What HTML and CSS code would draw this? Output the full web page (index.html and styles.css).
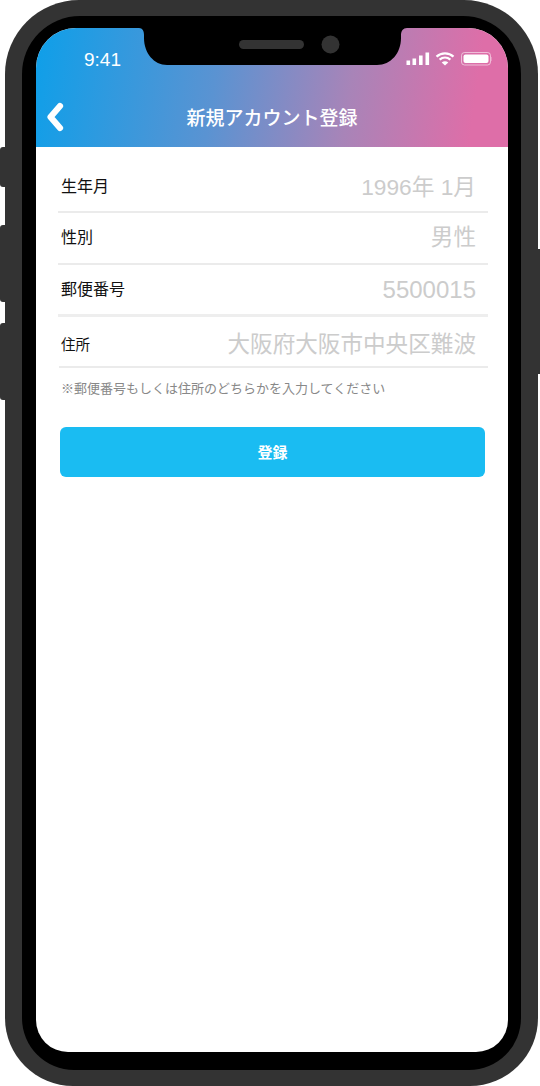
FILE: index.html
```html
<!DOCTYPE html>
<html lang="ja">
<head>
<meta charset="utf-8">
<title>新規アカウント登録</title>
<link rel="stylesheet" href="styles.css">
</head>
<body>
<div class="phone">
  <span class="side side-mute"></span>
  <span class="side side-up"></span>
  <span class="side side-down"></span>
  <span class="side side-power"></span>
  <div class="bezel">
    <div class="screen">
      <header class="header">
        <div class="status">
          <span class="time">9:41</span>
          <svg class="status-icons" width="86" height="15" viewBox="0 0 86 15">
            <rect x="0.500" y="8.500" width="3.600" height="4.500" fill="#fff"/>
            <rect x="6.500" y="6.500" width="3.600" height="6.500" fill="#fff"/>
            <rect x="13" y="3.500" width="3.600" height="9.500" fill="#fff"/>
            <rect x="19.500" y="0.500" width="3.600" height="12.500" fill="#fff"/>
            <path d="M30.500 4.600C35.300 0.200 42.700 0.200 47.500 4.600" fill="none" stroke="#fff" stroke-width="2.200"/>
            <path d="M33.600 7.700C36.800 5 41.200 5 44.400 7.700" fill="none" stroke="#fff" stroke-width="2.200"/>
            <path d="M39 13.600L35.700 10.400C37.700 8.900 40.300 8.900 42.300 10.400Z" fill="#fff"/>
            <rect x="55.500" y="0.500" width="29" height="12.500" rx="3" fill="none" stroke="#fff" stroke-opacity=".55"/>
            <rect x="57.500" y="2.500" width="25" height="8.500" rx="2" fill="#fff"/>
            <rect x="85.500" y="5" width="1" height="4" fill="#fff" fill-opacity=".55"/>
          </svg>
        </div>
        <nav class="nav">
          <svg class="back" width="18" height="30" viewBox="0 0 18 30">
            <path d="M14 4L4.500 15L14 26" fill="none" stroke="#fff" stroke-width="6.200" stroke-linecap="round" stroke-linejoin="round"/>
          </svg>
          <h1 class="title">新規アカウント登録</h1>
        </nav>
      </header>
      <svg class="notch" width="268" height="37" viewBox="0 0 268 37">
        <path d="M0 0C3.500 0 5 3 5 7V10C5 25 15 37 28 37H238C252 37 262 25 262 10V7C262 3 264 0 268 0Z" fill="#000"/>
        <rect x="100" y="12" width="65" height="9" rx="4.500" fill="#333"/>
        <circle cx="191.500" cy="16.500" r="9" fill="#333"/>
      </svg>
      <main class="form">
        <div class="row row-first">
          <span class="label">生年月</span>
          <span class="value value-date">1996年 1月</span>
        </div>
        <div class="row">
          <span class="label">性別</span>
          <span class="value">男性</span>
        </div>
        <div class="row row-strong">
          <span class="label">郵便番号</span>
          <span class="value value-number">5500015</span>
        </div>
        <div class="row row-address">
          <span class="label label-small">住所</span>
          <span class="value">大阪府大阪市中央区難波</span>
        </div>
        <p class="hint">※郵便番号もしくは住所のどちらかを入力してください</p>
        <button class="submit" type="button">登録</button>
      </main>
    </div>
  </div>
</div>
</body>
</html>
```
FILE: styles.css
```css
* {
  box-sizing: border-box;
}

html,
body {
  margin: 0;
  padding: 0;
  height: 1086px;
  background: #fff;
  overflow: hidden;
  font-family: "Liberation Sans", "Noto Sans CJK JP", sans-serif;
}

.phone {
  position: relative;
  width: 533px;
  height: 1086px;
  margin-left: 5px;
  padding: 16px 17px;
  background: #333;
  border-radius: 74px 74px 68px 68px;
}

.side {
  position: absolute;
  background: #333;
}

.side-mute,
.side-up,
.side-down {
  left: -5px;
  width: 6px;
  border-radius: 3px 0 0 3px;
}

.side-mute {
  top: 147px;
  height: 40px;
}

.side-up {
  top: 225px;
  height: 77px;
}

.side-down {
  top: 323px;
  height: 77px;
}

.side-power {
  top: 249px;
  right: -2px;
  width: 3px;
  height: 125px;
}

.bezel {
  height: 100%;
  padding: 12px 13px 18px 14px;
  background: #000;
  border-radius: 58px 58px 52px 52px;
}

.screen {
  position: relative;
  height: 100%;
  background: #fff;
  border-radius: 40px 40px 32px 32px;
  overflow: hidden;
}

.header {
  height: 119px;
  background: linear-gradient(98deg, #0e9fe9 0%, #5a93d2 38%, #a884b8 66%, #de6ea8 92%);
  color: #fff;
}

.status {
  display: flex;
  justify-content: space-between;
  align-items: flex-start;
  height: 60px;
  padding: 21px 16px 0 48px;
}

.time {
  font-size: 19px;
  line-height: 22px;
}

.status-icons {
  margin-top: 3px;
}

.nav {
  position: relative;
  display: flex;
  justify-content: center;
  align-items: center;
  height: 58px;
  padding-top: 3px;
}

.back {
  position: absolute;
  left: 10px;
  top: 14px;
}

.title {
  margin: 0;
  font-size: 19px;
  font-weight: 500;
  line-height: 28px;
}

.notch {
  position: absolute;
  top: 0;
  left: 103px;
}

.form {
  padding: 14px 20px 0 22px;
}

.row {
  display: flex;
  justify-content: space-between;
  align-items: center;
  height: 52px;
  padding: 0 12px 0 3px;
  border-bottom: 2px solid #ebebeb;
}

.row-first {
  padding-top: 1px;
}

.row-strong {
  border-bottom: 3px solid #eee;
}

.row-address {
  height: 51px;
  padding-top: 7px;
  margin-left: 1px;
  padding-left: 2px;
}

.label {
  font-size: 16px;
  line-height: 24px;
  color: #111;
}

.label-small {
  font-size: 14.500px;
}

.value {
  font-size: 22.600px;
  line-height: 30px;
  color: #ccc;
}

.value-date {
  font-size: 22.700px;
}

.value-number {
  font-size: 24px;
}

.hint {
  margin: 11px 0 0 3px;
  font-size: 13px;
  line-height: 20px;
  color: #888;
}

.submit {
  display: block;
  width: 425px;
  height: 50px;
  margin: 28px 0 0 2px;
  padding: 0 0 2px;
  border: 0;
  border-radius: 6px;
  background: #1abcf2;
  color: #fff;
  font-family: inherit;
  font-size: 15px;
  font-weight: 700;
}
```
